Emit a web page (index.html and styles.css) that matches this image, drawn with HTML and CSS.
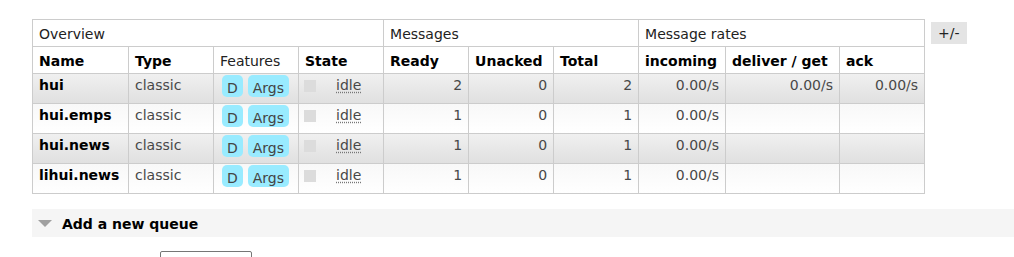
FILE: index.html
```html
<!DOCTYPE html>
<html lang="en">
<head>
<meta charset="utf-8">
<title>Queues</title>
<link rel="stylesheet" href="styles.css">
</head>
<body>
<div class="main">
  <div class="queues">
    <table class="list">
      <colgroup>
        <col class="w-name">
        <col class="w-std"><col class="w-std"><col class="w-std">
        <col class="w-std"><col class="w-std"><col class="w-std">
        <col class="w-in"><col class="w-get"><col class="w-std">
      </colgroup>
      <thead>
        <tr class="group">
          <th colspan="4">Overview</th>
          <th colspan="3">Messages</th>
          <th colspan="3">Message rates</th>
        </tr>
        <tr>
          <th>Name</th>
          <th>Type</th>
          <th class="plain">Features</th>
          <th>State</th>
          <th>Ready</th>
          <th>Unacked</th>
          <th>Total</th>
          <th>incoming</th>
          <th>deliver / get</th>
          <th>ack</th>
        </tr>
      </thead>
      <tbody>
        <tr class="alt1">
          <td class="name">hui</td>
          <td>classic</td>
          <td class="features"><span class="feat first">D</span><span class="feat">Args</span></td>
          <td><span class="dot"></span><abbr class="state">idle</abbr></td>
          <td class="r">2</td>
          <td class="r">0</td>
          <td class="r">2</td>
          <td class="r">0.00/s</td>
          <td class="r">0.00/s</td>
          <td class="r">0.00/s</td>
        </tr>
        <tr class="alt2">
          <td class="name">hui.emps</td>
          <td>classic</td>
          <td class="features"><span class="feat first">D</span><span class="feat">Args</span></td>
          <td><span class="dot"></span><abbr class="state">idle</abbr></td>
          <td class="r">1</td>
          <td class="r">0</td>
          <td class="r">1</td>
          <td class="r">0.00/s</td>
          <td class="r"></td>
          <td class="r"></td>
        </tr>
        <tr class="alt1">
          <td class="name">hui.news</td>
          <td>classic</td>
          <td class="features"><span class="feat first">D</span><span class="feat">Args</span></td>
          <td><span class="dot"></span><abbr class="state">idle</abbr></td>
          <td class="r">1</td>
          <td class="r">0</td>
          <td class="r">1</td>
          <td class="r">0.00/s</td>
          <td class="r"></td>
          <td class="r"></td>
        </tr>
        <tr class="alt2">
          <td class="name">lihui.news</td>
          <td>classic</td>
          <td class="features"><span class="feat first">D</span><span class="feat">Args</span></td>
          <td><span class="dot"></span><abbr class="state">idle</abbr></td>
          <td class="r">1</td>
          <td class="r">0</td>
          <td class="r">1</td>
          <td class="r">0.00/s</td>
          <td class="r"></td>
          <td class="r"></td>
        </tr>
      </tbody>
    </table>
    <span class="plus-minus">+/-</span>
  </div>

  <div class="section-head">
    <span class="arrow"></span>
    <h2>Add a new queue</h2>
  </div>

  <div class="form-row">
    <input class="field" type="text">
  </div>
</div>
</body>
</html>
```

FILE: styles.css
```css
* {
  box-sizing: border-box;
}

html,
body {
  overflow: hidden;
}

body {
  margin: 0;
  background: #fff;
  color: #484848;
  font: 14px/17px "DejaVu Sans", Verdana, sans-serif;
}

.main {
  padding: 19px 0 0 32px;
}

/* queue list with its column toggle */
.queues {
  display: flex;
  align-items: flex-start;
}

table.list {
  width: 893px;
  table-layout: fixed;
  border-collapse: separate;
  border-spacing: 0;
  border-left: 1px solid #ccc;
  border-top: 1px solid #ccc;
}

.w-name { width: 96px; }
.w-std  { width: 85px; }
.w-in   { width: 87px; }
.w-get  { width: 114px; }

.list th,
.list td {
  border-right: 1px solid #ccc;
  border-bottom: 1px solid #ccc;
  text-align: left;
  vertical-align: top;
  white-space: nowrap;
  overflow: hidden;
}

.list th {
  padding: 6px 6px 3px;
  background: #fff;
  color: #000;
  font-weight: bold;
}

.list .group th,
.list th.plain {
  font-weight: normal;
  color: #222;
}

.list td {
  padding: 3px 6px 9px;
}

.list td.features {
  padding-bottom: 6px;
}

.list td.r {
  text-align: right;
}

.list td.name {
  color: #000;
  font-weight: bold;
}

.alt1 td {
  background: linear-gradient(#f0f0f0, #e0e0e0);
}

.alt2 td {
  background: linear-gradient(#f8f8f8, #ffffff);
}

/* feature tags */
.feat {
  display: inline-block;
  height: 22px;
  padding: 5px 5px 0;
  margin: -2px 5px 0 0;
  vertical-align: top;
  border-radius: 5px;
  background: #99ebff;
  color: #444;
}

.feat.first {
  margin-left: 2px;
}

/* state column */
.dot {
  display: inline-block;
  width: 12px;
  height: 12px;
  margin: 3px 20px 0 -1px;
  vertical-align: top;
  background: #dcdcdc;
}

.state {
  text-decoration: underline dotted #777;
  text-underline-offset: 2px;
}

.plus-minus {
  margin: 3px 0 0 6px;
  height: 22px;
  line-height: 22px;
  padding: 0 7px;
  background: #e4e4e4;
  color: #222;
}

/* collapsible section header */
.section-head {
  display: flex;
  align-items: center;
  margin-top: 15px;
  height: 28px;
  padding: 0 0 0 6px;
  background: #f5f5f5;
}

.arrow {
  width: 0;
  height: 0;
  margin: 1px 10px 0 0;
  border-left: 7px solid transparent;
  border-right: 7px solid transparent;
  border-top: 7px solid #a0a0a0;
}

.section-head h2 {
  margin: 0;
  padding-top: 2px;
  font-size: 14px;
  line-height: 26px;
  color: #000;
  font-weight: bold;
}

.form-row {
  margin-top: 14px;
  padding-left: 128px;
}

.field {
  display: block;
  width: 92px;
  height: 24px;
  margin: 0;
  border: 1px solid #767676;
  border-radius: 2px;
  background: #fff;
}
```
